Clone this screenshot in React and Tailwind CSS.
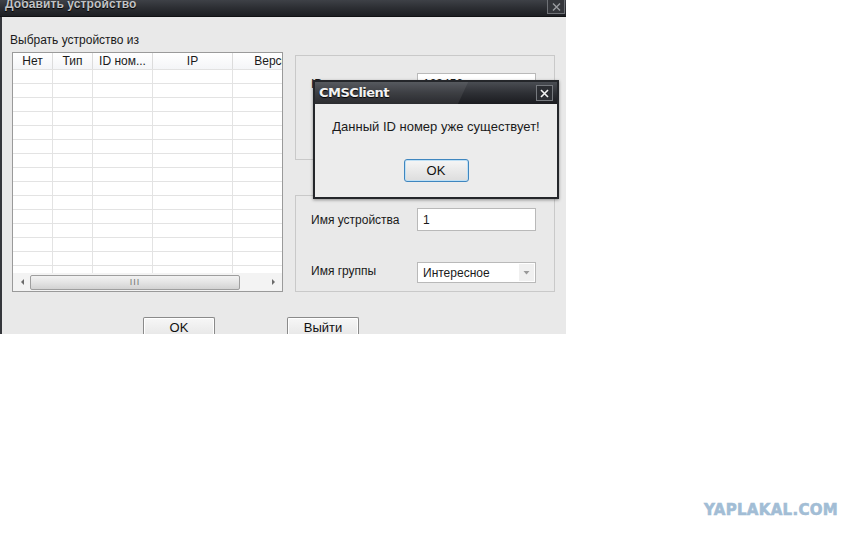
import React from 'react';

const cols = [
    { title: 'Нет', w: 'w-[40px]' },
    { title: 'Тип', w: 'w-[40px]' },
    { title: 'ID ном...', w: 'w-[60px]' },
    { title: 'IP', w: 'w-[80px]' },
    { title: 'Версия', w: 'w-[84px]' },
];

const rows = Array.from({ length: 15 }, (_, i) => i);

const DeviceTable = () => (
    <div className="ml-[10px] flex h-[240px] w-[271px] flex-col overflow-hidden border border-[#9a9a9a] bg-white">
        {/* header */}
        <div className="flex h-[17px] shrink-0 border-b border-[#e2e2e2] bg-gradient-to-b from-white to-[#f4f5f7]">
            {cols.map((c) => (
                <div key={c.title} className={`${c.w} shrink-0 whitespace-nowrap border-r border-[#dcdcdc] text-center text-[12px] leading-[16px] text-[#1a1a1a]`}>
                    {c.title}
                </div>
            ))}
        </div>
        {/* empty rows */}
        <div className="h-[203px] shrink-0 overflow-hidden">
            {rows.map((r) => (
                <div key={r} className="flex h-[14px] border-b border-[#e3e3e3]">
                    {cols.map((c) => (
                        <div key={c.title} className={`${c.w} shrink-0 border-r border-[#e3e3e3]`}></div>
                    ))}
                </div>
            ))}
        </div>
        {/* horizontal scrollbar */}
        <div className="flex h-[18px] shrink-0 items-center bg-[#f3f3f3]">
            <svg width="10" height="10" viewBox="0 0 10 10" className="ml-[5px]">
                <path d="M6 2 L3 5 L6 8 Z" fill="#6b6b6b" />
            </svg>
            <div className="ml-[2px] flex h-[15px] w-[210px] items-center justify-center rounded-[2px] border border-[#9e9e9e] bg-gradient-to-b from-[#f2f2f2] via-[#e4e4e4] to-[#d2d2d2]">
                <span className="text-[9px] leading-[9px] tracking-[1px] text-[#777]">III</span>
            </div>
            <svg width="10" height="10" viewBox="0 0 10 10" className="ml-auto mr-[4px]">
                <path d="M4 2 L7 5 L4 8 Z" fill="#6b6b6b" />
            </svg>
        </div>
    </div>
);

const Field = ({ children, className = 'items-center' }) => (
    <div className={`${className} flex h-[23px] w-[119px] border border-[#b9b9b9] bg-white px-[5px] text-[12px] text-[#1a1a1a]`}>
        {children}
    </div>
);

const MessageBox = () => (
    <div className="absolute left-[313px] top-[80px] flex h-[119px] w-[246px] flex-col border-2 border-[#24262a] bg-[#ececec] shadow-[0_1px_3px_rgba(0,0,0,0.4)]">
        <div className="relative flex h-[22px] shrink-0 items-center overflow-hidden bg-gradient-to-b from-[#4a4d53] via-[#2e3035] to-[#1b1c20] px-[4px]">
            {/* glass reflection */}
            <div className="absolute -left-[10px] top-0 h-full w-[158px] skew-x-[-25deg] bg-white/[0.07]"></div>
            <span className="relative font-['DejaVu_Sans'] text-[13px] font-bold tracking-[-0.5px] text-[#f2f2f2] [text-shadow:0_1px_1px_#000]">CMSClient</span>
            <div className="relative ml-auto flex h-[16px] w-[17px] items-center justify-center border border-[#76797e] bg-[#2c2e33]">
                <svg width="9" height="9" viewBox="0 0 9 9">
                    <path d="M1 1 L8 8 M8 1 L1 8" stroke="#f4f4f4" strokeWidth="1.6" />
                </svg>
            </div>
        </div>
        <div className="flex flex-1 flex-col items-center">
            <p className="mt-[15px] text-[13px] leading-[16px] text-[#1a1a1a]">Данный ID номер уже существует!</p>
            <button className="mt-[24px] h-[23px] w-[65px] rounded-[3px] border border-[#3f86bf] bg-gradient-to-b from-[#f6f6f6] to-[#dddddd] text-[13px] text-[#111] shadow-[inset_0_0_0_1px_#bfe0f5]">
                OK
            </button>
        </div>
    </div>
);

const DialogButton = ({ children, className }) => (
    <button className={`${className} h-[20px] w-[72px] rounded-t-[2px] border border-b-0 border-[#8a8a8a] bg-gradient-to-b from-[#f7f7f7] to-[#e6e6e6] text-[13px] leading-[18px] text-[#111] shadow-[inset_0_0_0_1px_#fff]`}>
        {children}
    </button>
);

export default function App() {
    return (
        <div className="flex h-[540px] w-[864px] flex-col bg-white font-['Liberation_Sans',sans-serif]">
            <div className="relative flex h-[334px] w-[566px] shrink-0 flex-col overflow-hidden">
                {/* title bar */}
                <div className="flex h-[17px] shrink-0 items-start overflow-hidden border-b border-[#111214] bg-gradient-to-b from-[#3e4147] via-[#2c2e33] to-[#1d1f23]">
                    <span className="-mt-[2px] ml-[5px] text-[12px] font-bold leading-[13px] tracking-[0.1px] text-[#c0c2c5] [text-shadow:0_1px_1px_#000]">
                        Добавить устройство
                    </span>
                    <div className="ml-auto mr-[1px] flex h-[14px] w-[18px] items-center justify-center border border-t-0 border-[#6e7176] bg-[#34363b]">
                        <svg width="9" height="8" viewBox="0 0 9 8">
                            <path d="M1 0.5 L8 7.5 M8 0.5 L1 7.5" stroke="#9a9ca0" strokeWidth="1.4" />
                        </svg>
                    </div>
                </div>

                <div className="flex flex-1 flex-col border-l-2 border-[#35373c] bg-[#e9e9e9]">
                    <div className="ml-[8px] mt-[16px] text-[12px] leading-[14px] text-[#1a1a1a]">Выбрать устройство из</div>

                    <div className="mt-[5px] flex">
                        <DeviceTable />

                        <div className="ml-[12px] flex w-[260px] flex-col pt-[3px]">
                            <div className="flex h-[105px] border border-[#c9c9c9] pt-[17px]">
                                <div className="ml-[15px] w-[106px] pt-[2px] text-[12px] text-[#1a1a1a]">ID номер</div>
                                <Field className="items-start pt-[1px]">123456</Field>
                            </div>
                            <div className="mt-[35px] flex h-[97px] flex-col border border-[#c9c9c9] pt-[12px]">
                                <div className="flex items-center">
                                    <div className="ml-[15px] w-[106px] text-[12px] text-[#1a1a1a]">Имя устройства</div>
                                    <Field>1</Field>
                                </div>
                                <div className="mt-[31px] flex items-center">
                                    <div className="ml-[15px] w-[106px] -mt-[4px] text-[12px] text-[#1a1a1a]">Имя группы</div>
                                    <div className="flex h-[21px] w-[119px] items-center border border-[#b9b9b9] bg-white pl-[5px] text-[12px] text-[#1a1a1a]">
                                        Интересное
                                        <div className="ml-auto mr-[1px] flex h-[17px] w-[15px] items-center justify-center bg-[#f0f0f0]">
                                            <svg width="7" height="5" viewBox="0 0 7 5">
                                                <path d="M0.5 1 L6.5 1 L3.5 4.5 Z" fill="#9a9a9a" />
                                            </svg>
                                        </div>
                                    </div>
                                </div>
                            </div>
                        </div>
                    </div>

                    <div className="mt-[25px] flex">
                        <DialogButton className="ml-[141px]">OK</DialogButton>
                        <DialogButton className="ml-[72px]">Выйти</DialogButton>
                    </div>
                </div>

                <MessageBox />
            </div>

            <div className="flex-1"></div>
            <div className="flex justify-end pb-[21px] pr-[26px]">
                <span className="font-['DejaVu_Sans'] text-[15px] font-bold leading-[18px] tracking-[0.3px] text-[#a2bdd5] [-webkit-text-stroke:0.6px_#a2bdd5]">YAPLAKAL.COM</span>
            </div>
        </div>
    );
}
